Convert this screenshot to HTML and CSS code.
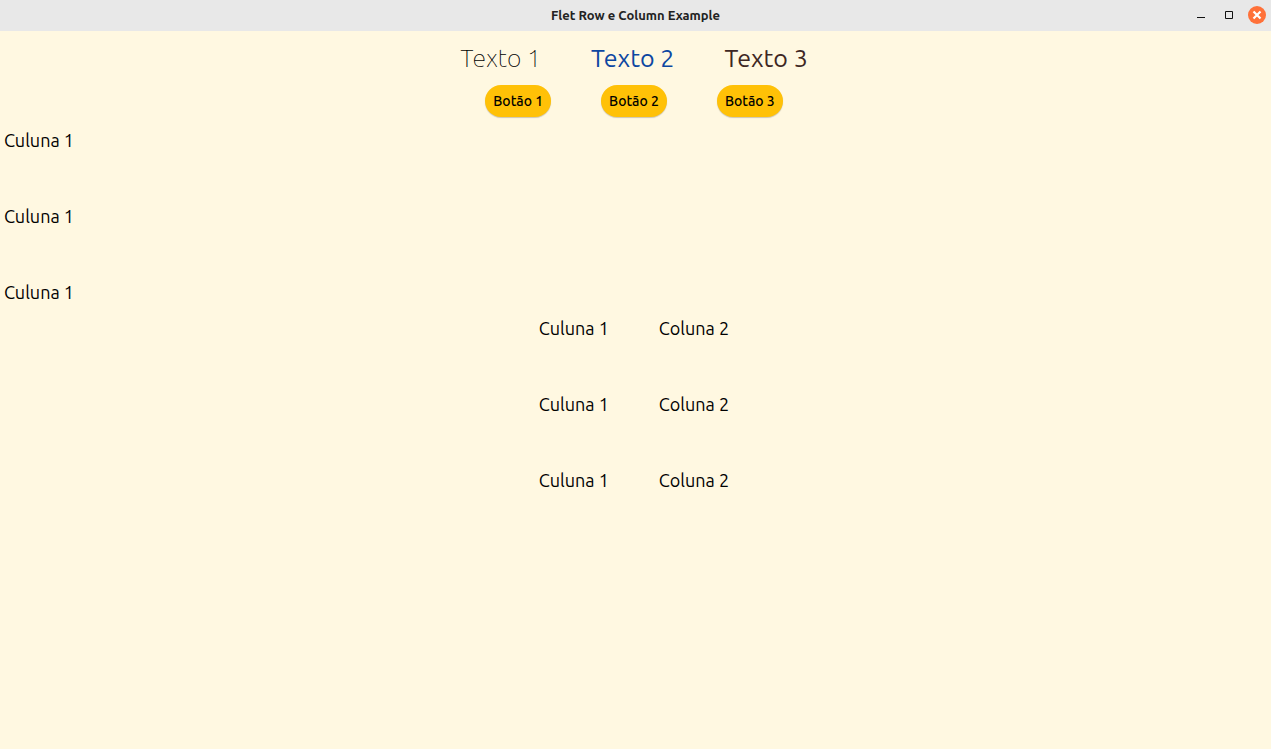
FILE: index.html
```html
<!DOCTYPE html>
<html lang="pt-BR">
<head>
<meta charset="utf-8">
<title>Flet Row e Column Example</title>
<link rel="stylesheet" href="styles.css">
</head>
<body>
<header class="titlebar">
  <h1 class="title">Flet Row e Column Example</h1>
  <div class="controls">
    <button class="control" aria-label="Minimizar"><svg width="18" height="18" viewBox="0 0 18 18"><path d="M5 11.5h8" fill="none" stroke="#111" stroke-width="1"/></svg></button>
    <button class="control" aria-label="Maximizar"><svg width="18" height="18" viewBox="0 0 18 18"><path d="M5.5 5.5h7v7h-7z" fill="none" stroke="#111" stroke-width="1"/></svg></button>
    <button class="control" aria-label="Fechar"><svg width="18" height="18" viewBox="0 0 18 18"><circle cx="9" cy="9" r="9" fill="#ff7139"/><path d="M5.5 5.5l7 7M12.5 5.5l-7 7" fill="none" stroke="#fff" stroke-width="2.2"/></svg></button>
  </div>
</header>
<main class="page">
  <div class="row texts">
    <span class="text thin">Texto 1</span>
    <span class="text blue">Texto 2</span>
    <span class="text brown">Texto 3</span>
  </div>
  <div class="row buttons">
    <button class="button">Botão 1</button>
    <button class="button">Botão 2</button>
    <button class="button">Botão 3</button>
  </div>
  <div class="column">
    <span>Culuna 1</span>
    <span>Culuna 1</span>
    <span>Culuna 1</span>
  </div>
  <div class="row columns">
    <div class="column">
      <span>Culuna 1</span>
      <span>Culuna 1</span>
      <span>Culuna 1</span>
    </div>
    <div class="column">
      <span>Coluna 2</span>
      <span>Coluna 2</span>
      <span>Coluna 2</span>
    </div>
  </div>
</main>
</body>
</html>
```
FILE: styles.css
```css
body {
  margin: 0;
  min-height: 100vh;
  background: #fff8e1;
  color: #000;
  font-family: Ubuntu, "Noto Sans", sans-serif;
}
.titlebar {
  display: grid;
  grid-template-columns: 1fr auto 1fr;
  align-items: center;
  height: 30px;
  padding: 0 5px;
  border-bottom: 1px solid #e8e8e8;
  background: #e8e8e8;
}
.title {
  grid-column: 2;
  margin: 0;
  color: #222;
  font-size: 13px;
  font-weight: 600;
}
.controls {
  display: flex;
  justify-content: flex-end;
  gap: 10px;
}
.control {
  display: flex;
  padding: 0;
  border: 0;
  background: none;
}
.page {
  display: flex;
  flex-direction: column;
  gap: 10px;
  padding: 12px 7px 12px 4px;
}
.row {
  display: flex;
  justify-content: center;
  gap: 50px;
}
.texts {
  padding-bottom: 2px;
}
.text {
  font-size: 25px;
  line-height: 30px;
}
.thin {
  font-family: "Ubuntu Thin", Ubuntu, "Noto Sans", sans-serif;
  font-weight: 100;
}
.blue {
  color: #0d47a1;
}
.brown {
  color: #3e2723;
}
.button {
  height: 32px;
  padding: 0 8px;
  border: 0;
  border-radius: 16px;
  background: #ffc107;
  box-shadow: 0 1px 1px rgba(0, 0, 0, 0.2);
  color: #000;
  font: 500 14px Ubuntu, "Noto Sans", sans-serif;
}
.column {
  display: flex;
  flex-direction: column;
  gap: 50px;
  font-size: 18px;
  line-height: 26px;
}
```
